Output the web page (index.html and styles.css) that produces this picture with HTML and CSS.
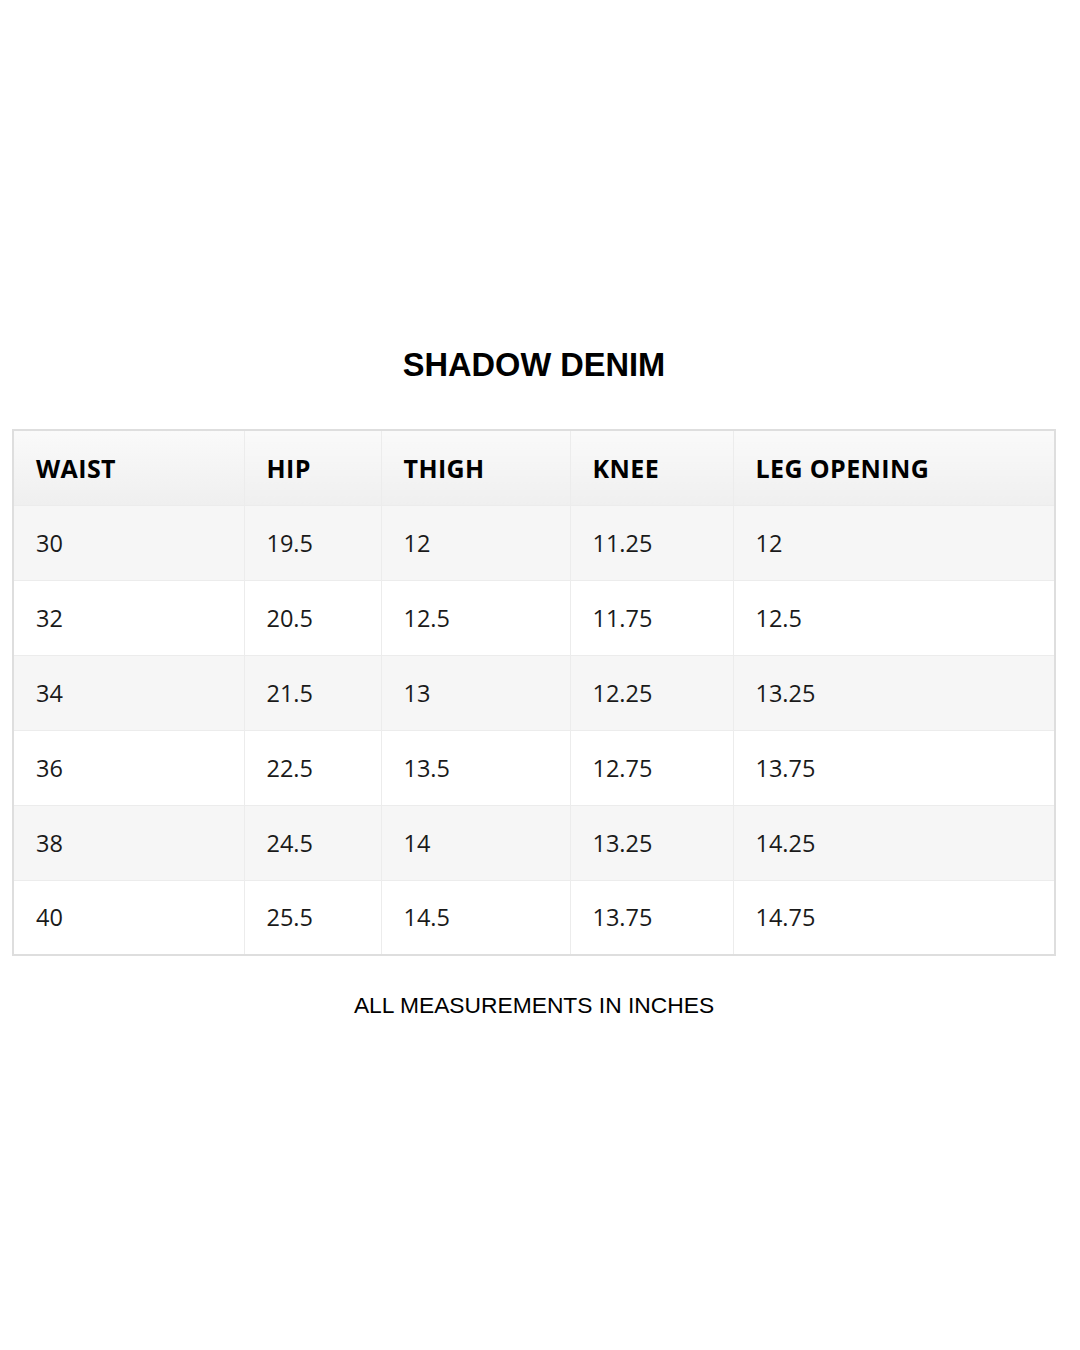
FILE: index.html
```html
<!DOCTYPE html>
<html>
<head>
<meta charset="utf-8">
<link rel="stylesheet" href="styles.css">
</head>
<body>
<main class="page">
  <h1 class="title">SHADOW DENIM</h1>
  <table class="size-table">
    <colgroup>
      <col class="c1"><col class="c2"><col class="c3"><col class="c4"><col class="c5">
    </colgroup>
    <thead>
      <tr><th>WAIST</th><th>HIP</th><th>THIGH</th><th>KNEE</th><th>LEG OPENING</th></tr>
    </thead>
    <tbody>
      <tr><td>30</td><td>19.5</td><td>12</td><td>11.25</td><td>12</td></tr>
      <tr><td>32</td><td>20.5</td><td>12.5</td><td>11.75</td><td>12.5</td></tr>
      <tr><td>34</td><td>21.5</td><td>13</td><td>12.25</td><td>13.25</td></tr>
      <tr><td>36</td><td>22.5</td><td>13.5</td><td>12.75</td><td>13.75</td></tr>
      <tr><td>38</td><td>24.5</td><td>14</td><td>13.25</td><td>14.25</td></tr>
      <tr><td>40</td><td>25.5</td><td>14.5</td><td>13.75</td><td>14.75</td></tr>
    </tbody>
  </table>
  <p class="note">ALL MEASUREMENTS IN INCHES</p>
</main>
</body>
</html>
```

FILE: styles.css
```css
html, body {
  margin: 0;
  padding: 0;
  background: #ffffff;
}

.page {
  width: 1080px;
  height: 1350px;
  padding: 345px 24px 0 12px;
  box-sizing: border-box;
}

.title {
  margin: 0;
  font-family: "Liberation Sans", Arial, sans-serif;
  font-weight: 700;
  font-size: 32.6px;
  line-height: 40px;
  text-align: center;
  color: #000;
}

.size-table {
  margin-top: 44px;
  width: 1044px;
  border-collapse: collapse;
  table-layout: fixed;
  border: 2px solid #dedede;
  font-family: "Open Sans", sans-serif;
  color: #111;
}

.c1 { width: 231px; }
.c2 { width: 137px; }
.c3 { width: 189px; }
.c4 { width: 163px; }
.c5 { width: auto; }

.size-table th,
.size-table td {
  height: 75px;
  box-sizing: border-box;
  padding: 0 0 0 22px;
  text-align: left;
  border: 1px solid #ececec;
  font-size: 23.5px;
  vertical-align: middle;
}

.size-table th {
  font-weight: 700;
  font-size: 25px;
  letter-spacing: 0.4px;
  color: #000;
  background: linear-gradient(#fafafa, #efefef);
}

.size-table td {
  font-weight: 400;
  color: #1a1a1a;
}

.size-table tbody tr:nth-child(odd) td {
  background: #f6f6f6;
}

.size-table tbody tr:nth-child(even) td {
  background: #ffffff;
}

.note {
  margin: 35px 0 0;
  font-family: "Liberation Sans", Arial, sans-serif;
  font-size: 22.8px;
  line-height: 28px;
  text-align: center;
  color: #000;
}
```
